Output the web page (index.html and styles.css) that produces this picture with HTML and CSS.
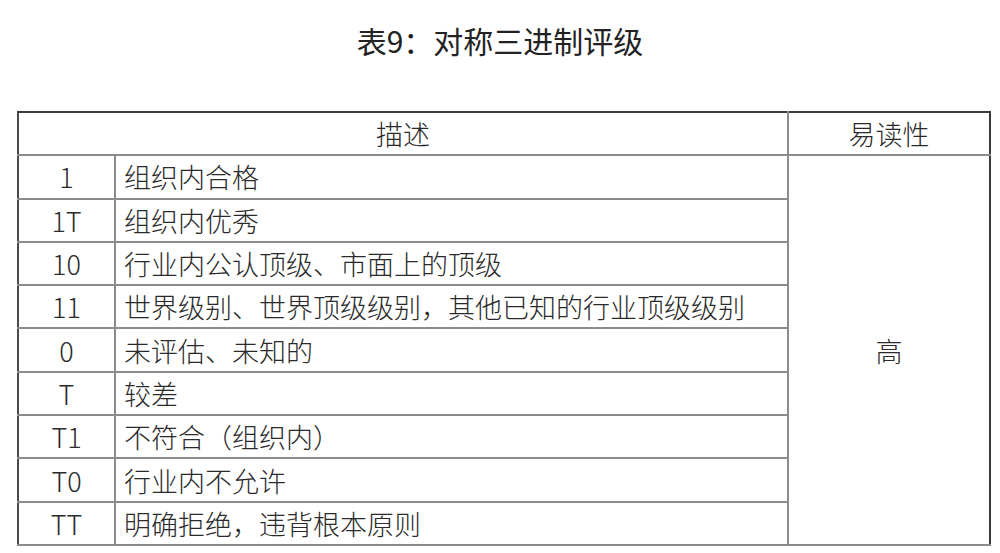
FILE: index.html
```html
<!DOCTYPE html>
<html lang="zh">
<head>
<meta charset="utf-8">
<link rel="stylesheet" href="styles.css">
</head>
<body>
<h1 class="title">表9：对称三进制评级</h1>
<table class="grid">
  <colgroup>
    <col class="c1"><col class="c2"><col class="c3">
  </colgroup>
  <thead>
    <tr><th colspan="2">描述</th><th class="last">易读性</th></tr>
  </thead>
  <tbody>
    <tr><td class="code">1</td><td class="desc">组织内合格</td><td class="last read" rowspan="9">高</td></tr>
    <tr><td class="code">1T</td><td class="desc">组织内优秀</td></tr>
    <tr><td class="code">10</td><td class="desc">行业内公认顶级、市面上的顶级</td></tr>
    <tr><td class="code">11</td><td class="desc">世界级别、世界顶级级别，其他已知的行业顶级级别</td></tr>
    <tr><td class="code">0</td><td class="desc">未评估、未知的</td></tr>
    <tr><td class="code">T</td><td class="desc">较差</td></tr>
    <tr><td class="code">T1</td><td class="desc">不符合（组织内）</td></tr>
    <tr><td class="code">T0</td><td class="desc">行业内不允许</td></tr>
    <tr><td class="code">TT</td><td class="desc">明确拒绝，违背根本原则</td></tr>
  </tbody>
</table>
</body>
</html>
```
FILE: styles.css
```css
html, body {
  margin: 0;
  padding: 0;
  background: #ffffff;
}
body {
  width: 1000px;
  height: 553px;
  overflow: hidden;
  font-family: "Noto Sans CJK SC", "Noto Sans", sans-serif;
  font-weight: 300;
  color: #2a2a2a;
}
.title {
  margin: 0;
  padding-top: 20px;
  height: 111px;
  box-sizing: border-box;
  font-size: 30px;
  font-weight: 400;
  line-height: 40px;
  text-align: center;
  color: #222222;
}
.grid {
  margin-left: 17px;
  width: 972px;
  border-collapse: collapse;
  table-layout: fixed;
  font-size: 27px;
  line-height: 1;
  border-left: 2px solid #4a4a4a;
  border-right: 2px solid #3a3a3a;
  border-top: 2px solid #3c3c3c;
  border-bottom: 2px solid #8a8a8a;
}
.c1 { width: 97px; }
.c2 { width: 673px; }
.c3 { width: 202px; }
.grid th, .grid td {
  border: 2px solid #8c8c8c;
  height: 41.3px;
  padding: 0;
  font-weight: 300;
  vertical-align: middle;
}
.grid th {
  text-align: center;
  border-top: 2px solid #3c3c3c;
}
.grid th:first-child, .grid td.code {
  border-left: 2px solid #4a4a4a;
}
.grid .last {
  border-right: 2px solid #3a3a3a;
}
.code {
  text-align: center;
}
.desc {
  text-align: left;
  padding-left: 8px !important;
  white-space: nowrap;
}
.read {
  text-align: center;
}
```
